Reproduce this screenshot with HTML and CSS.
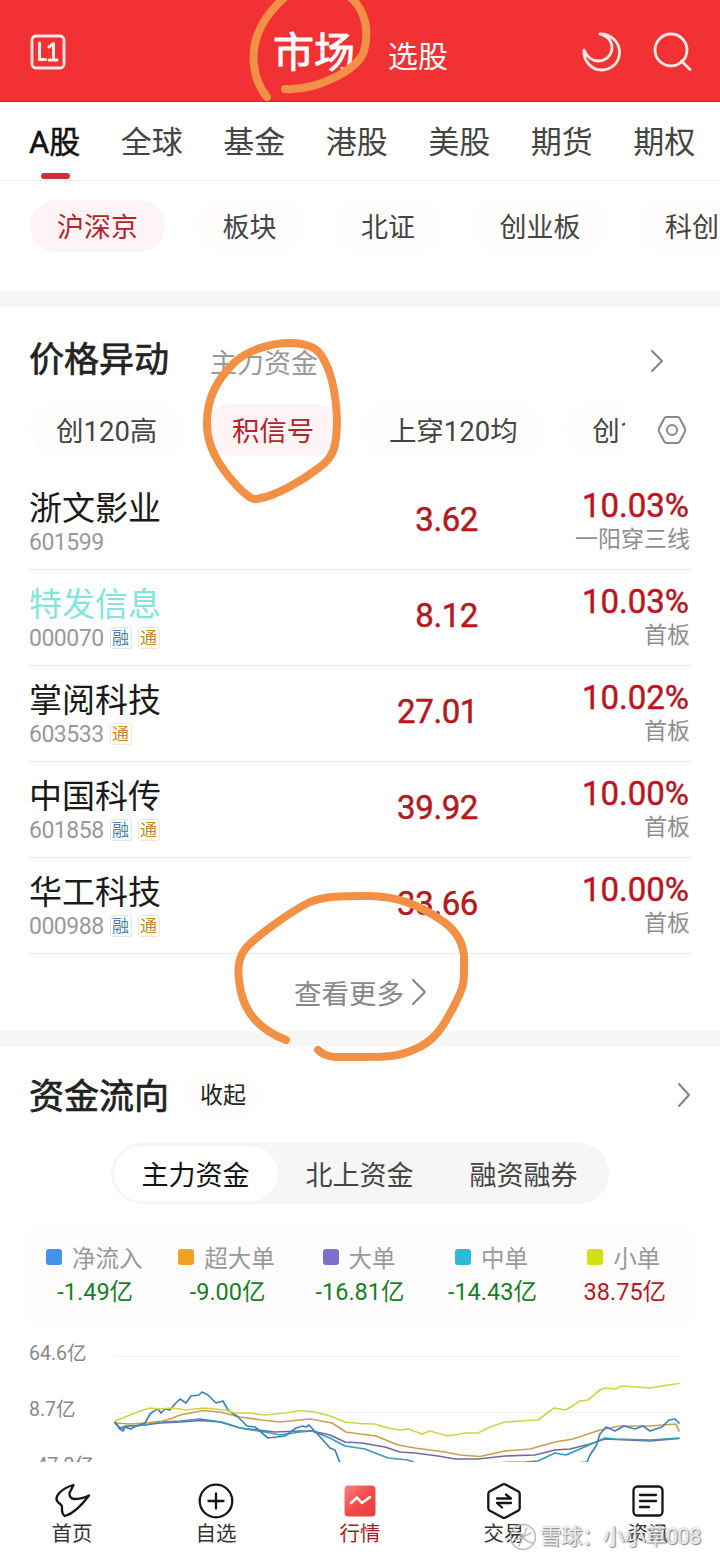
FILE: index.html
```html
<!DOCTYPE html>
<html lang="zh-CN">
<head>
<meta charset="utf-8">
<title>市场</title>
<link rel="stylesheet" href="styles.css">
</head>
<body>
<div class="app">
  <header class="topbar">
    <svg class="level" width="36" height="36" viewBox="0 0 36 36"><rect x="2" y="2" width="32" height="32" rx="4"/><path class="level-mark" d="M9.500 9V25.500H15.500M19 13L23.500 9.500V25.500M19 26H27"/></svg>
    <div class="top-tabs"><b class="top-on">市场</b><span class="top-off">选股</span></div>
    <svg class="moon" width="40" height="40" viewBox="0 0 40 40"><path d="M19 2C26 4 31 9 31 15.500C31 23 25 29 17.500 29C10 29 6 25 3 18C2 28 10 38 20.500 38C30.500 38 38.500 30.500 38.500 20.500C38.500 10 30 2 19 2Z"/></svg>
    <svg class="search" width="40" height="40" viewBox="0 0 40 40"><circle cx="19" cy="18" r="16"/><path d="M29.500 29L38 37.500"/></svg>
  </header>
  <nav class="markets"><span class="market on">A股</span><span class="market">全球</span><span class="market">基金</span><span class="market">港股</span><span class="market">美股</span><span class="market">期货</span><span class="market">期权</span></nav>
  <div class="chips boards"><span class="chip on">沪深京</span><span class="chip">板块</span><span class="chip">北证</span><span class="chip">创业板</span><span class="chip">科创板</span></div>
  <div class="band"></div>
  <section class="moves">
    <div class="head"><h2>价格异动</h2><span class="head-alt">主力资金</span><svg class="chev near" width="14" height="24" viewBox="0 0 14 24"><path d="M2 2L12 12L2 22"/></svg></div>
    <div class="signals">
      <div class="chips signal-chips"><span class="chip">创120高</span><span class="chip on">积信号</span><span class="chip">上穿120均</span><span class="chip">创120低</span></div>
      <svg class="hex" width="30" height="30" viewBox="0 0 30 30"><path d="M9.500 2H20.500Q22 2 22.800 3.500L28 13.500Q28.600 15 28 16.500L22.800 26.500Q22 28 20.500 28H9.500Q8 28 7.200 26.500L2 16.500Q1.400 15 2 13.500L7.200 3.500Q8 2 9.500 2Z"/><circle cx="15" cy="15" r="5"/></svg>
    </div>
    <div class="row"><div class="stock"><div class="name">浙文影业</div><div class="code">601599</div></div><div class="price">3.62</div><div class="gain"><div class="pct">10.03%</div><div class="why">一阳穿三线</div></div></div>
    <div class="row"><div class="stock"><div class="name seen">特发信息</div><div class="code">000070<i class="tag blue">融</i><i class="tag">通</i></div></div><div class="price">8.12</div><div class="gain"><div class="pct">10.03%</div><div class="why">首板</div></div></div>
    <div class="row"><div class="stock"><div class="name">掌阅科技</div><div class="code">603533<i class="tag">通</i></div></div><div class="price">27.01</div><div class="gain"><div class="pct">10.02%</div><div class="why">首板</div></div></div>
    <div class="row"><div class="stock"><div class="name">中国科传</div><div class="code">601858<i class="tag blue">融</i><i class="tag">通</i></div></div><div class="price">39.92</div><div class="gain"><div class="pct">10.00%</div><div class="why">首板</div></div></div>
    <div class="row"><div class="stock"><div class="name">华工科技</div><div class="code">000988<i class="tag blue">融</i><i class="tag">通</i></div></div><div class="price">33.66</div><div class="gain"><div class="pct">10.00%</div><div class="why">首板</div></div></div>
    <div class="more">查看更多<svg class="chev" width="16" height="28" viewBox="0 0 16 28"><path d="M2 2L14 14L2 26"/></svg></div>
  </section>
  <div class="band"></div>
  <section class="flows">
    <div class="head flow-head"><h2>资金流向</h2><span class="fold">收起</span><svg class="chev" width="14" height="26" viewBox="0 0 14 26"><path d="M2 2L12 13L2 24"/></svg></div>
    <div class="segment"><span class="seg on">主力资金</span><span class="seg">北上资金</span><span class="seg">融资融券</span></div>
    <div class="legend">
      <div class="item"><div class="key"><i class="dot net"></i>净流入</div><div class="val">-1.49亿</div></div>
      <div class="item"><div class="key"><i class="dot huge"></i>超大单</div><div class="val">-9.00亿</div></div>
      <div class="item"><div class="key"><i class="dot large"></i>大单</div><div class="val">-16.81亿</div></div>
      <div class="item"><div class="key"><i class="dot mid"></i>中单</div><div class="val">-14.43亿</div></div>
      <div class="item"><div class="key"><i class="dot small"></i>小单</div><div class="val up">38.75亿</div></div>
    </div>
    <div class="chart">
      <div class="axis"><span>64.6亿</span><span>8.7亿</span><span class="low">-47.2亿</span></div>
      <svg class="plot" width="620" height="132" viewBox="100 1330 620 132">
        <path class="grid" d="M115 1355.500H680M115 1411.500H680"/>
        <polyline class="l-large" points="115,1422 120,1427 126,1425 145,1424 160,1422 180,1421 200,1419.500 220,1421 240,1427 275,1431 300,1430 312,1430 330,1434 345,1441 362,1442 385,1446 400,1451 415,1452 438,1455 455,1458 478,1458 505,1455 535,1454 555,1449 570,1448 590,1443 605,1438 650,1440 679,1437.500"/>
        <polyline class="l-mid" points="115,1421 120,1428 126,1425 135,1425 145,1424 160,1421 180,1420 200,1418 222,1421 240,1427 265,1431 280,1434 300,1431 312,1430 330,1437 345,1445 365,1448 388,1457 408,1459 416,1462"/>
        <polyline class="l-mid" points="503,1461.500 525,1461 538,1460 555,1452 566,1454 580,1448 605,1437 615,1438 650,1439 679,1437"/>
        <polyline class="l-huge" points="115,1422 130,1423 145,1422 162,1420 170,1418 180,1414 203,1409.500 220,1411 240,1416 262,1419 280,1421 300,1419 310,1418 332,1422 346,1431 360,1433 376,1435 398,1444 415,1447 445,1451 460,1454 480,1455.500 505,1450 530,1448 555,1441 573,1438 600,1429 620,1425 650,1425 676,1423 679,1430"/>
        <polyline class="l-net" points="115,1421 119,1427 123,1430 125,1426 131,1428 134,1426 145,1422 150,1413 154,1410 158,1408 161,1412 165,1408 170,1409 175,1403 180,1398 186,1402 191,1395 199,1394 202,1391 208,1394 216,1402 223,1400 228,1409 238,1416 247,1425 255,1426 268,1437 285,1435 296,1427 303,1425 306,1426 309,1424 322,1438 330,1447 335,1449 340,1462"/>
        <polyline class="l-net" points="581,1461.500 587,1461 590,1454 596,1445 600,1433 606,1426 615,1430 624,1425 635,1428 643,1425 650,1430 662,1426 669,1419 675,1418 679,1422"/>
        <polyline class="l-small" points="115,1420 130,1414 140,1410 150,1407 160,1408 170,1407 180,1408 185,1409 205,1407 225,1409 235,1412 250,1412 265,1414 285,1412 300,1409.500 315,1411 330,1415 345,1421 360,1422.500 375,1423 388,1427 400,1429 408,1428 422,1433 430,1430 448,1435 465,1432 478,1432 490,1426 505,1421 520,1420 538,1419 554,1407 566,1409 580,1400 588,1399 600,1389 605,1387 615,1388 622,1385 650,1387 668,1384 679,1382.500"/>
      </svg>
    </div>
  </section>
  <nav class="tabbar">
    <a class="tab"><svg width="38" height="38" viewBox="0 0 38 38"><path d="M20.500 3C9 6 0 15 5 20C6.500 22 9 22.500 9 25Q8.500 32 12 34Q23 31 36 13.500Q29 17 21 17Q16 16 16.500 11Z"/></svg>首页</a>
    <a class="tab"><svg width="38" height="38" viewBox="0 0 38 38"><circle cx="19" cy="19" r="16.300"/><path d="M19 11.500V26.500M11.500 19H26.500"/></svg>自选</a>
    <a class="tab on"><svg width="38" height="38" viewBox="0 0 38 38"><defs><linearGradient id="g" x1="0" y1="0" x2="1" y2="1"><stop offset="0" stop-color="#f9817c"/><stop offset=".5" stop-color="#f14d4d"/><stop offset="1" stop-color="#e83c40"/></linearGradient></defs><rect class="tile" x="3.500" y="3.500" width="31" height="31" rx="4"/><path class="trend" d="M10 21L16 15.500L21 21L29 15"/></svg>行情</a>
    <a class="tab"><svg width="38" height="38" viewBox="0 0 38 38"><path d="M17.500 2.500Q19 1.700 20.500 2.500L33.500 9.500Q34.700 10.300 34.700 12V26Q34.700 27.700 33.500 28.500L20.500 35.500Q19 36.300 17.500 35.500L4.500 28.500Q3.300 27.700 3.300 26V12Q3.300 10.300 4.500 9.500Z"/><path d="M12 16.500H26L21 12.500M26 21H12L17 25.500"/></svg>交易</a>
    <a class="tab"><svg width="38" height="38" viewBox="0 0 38 38"><rect x="4.500" y="4.500" width="29" height="29" rx="4"/><path d="M11 13H27M11 19H27M11 25H20"/></svg>资讯</a>
  </nav>
  <div class="watermark"><svg width="28" height="28" viewBox="0 0 28 28"><circle cx="14" cy="14" r="12.500"/><path d="M5 8Q12 10 14 14Q17 19 24 20M18 5L14 14L22 10M10 23L14 14L6 17"/></svg><span>雪球：小小草008</span></div>
  <svg class="marks" width="720" height="1559" viewBox="0 0 720 1559">
    <path d="M267 97Q256 84 254 65C251 40 261 18 286 -4M343 -8C362 3 371 25 364 51C358 70 316 91 285 89"/>
    <path d="M290 343C302 343 314 345 321 355C332 371 336 398 337 418C337 446 334 457 320 467C302 481 276 496 257 499C252 500 246 495 238 487C221 469 207 447 207 425C206 398 219 377 235 362C250 349 272 343 290 343Z"/>
    <path d="M286 1040C260 1030 246 1014 241 992C237 973 237 959 246 948C253 939 291 911 310 902C325 896 340 896 368 896C397 896 420 905 444 922C460 934 465 948 464 963C464 980 465 985 456 1002C445 1023 437 1041 413 1050C397 1057 385 1057 360 1057H335Q324 1056 318 1050"/>
  </svg>
</div>
</body>
</html>
```
FILE: styles.css
```css
* { box-sizing: border-box; }
body { margin: 0; background: #fff; font-family: Roboto, "Noto Sans CJK SC", sans-serif; color: #222; }
svg { display: block; flex: none; fill: none; stroke-linecap: round; stroke-linejoin: round; }
i { font-style: normal; }
h2 { margin: 0; font-size: 35px; font-weight: 400; -webkit-text-stroke: .7px; line-height: 48px; }
.app { position: relative; width: 720px; height: 1559px; overflow: hidden; display: flex; flex-direction: column; white-space: nowrap; }

.topbar { height: 102px; padding: 3px 28px 0 30px; background: #f13133; color: #fff; display: flex; align-items: center; border-bottom: 1px solid #bd2b30; }
.topbar svg { stroke: #ffe9e5; stroke-width: 2.8; }
.topbar .level-mark { stroke-width: 3; }
.top-tabs { display: flex; align-items: center; gap: 33px; margin: 0 auto 0 207px; line-height: 60px; }
.top-on { font-size: 41px; font-weight: 400; -webkit-text-stroke: .9px; padding-top: 1px; }
.top-off { font-size: 30px; padding-top: 9px; }
.search { margin-left: 31px; }

.markets { height: 79px; padding-left: 29px; display: flex; gap: 40.5px; border-bottom: 1px solid #f0f0f0; font-size: 31px; line-height: 81px; color: #444; }
.market { position: relative; height: 78px; }
.market.on { color: #111; -webkit-text-stroke: .5px; }
.market.on::after { content: ""; position: absolute; left: 12px; bottom: 1px; width: 29px; height: 6px; border-radius: 3px; background: #cf2f35; }

.chips { display: flex; }
.chip { flex: none; height: 52px; padding: 0 27px; border-radius: 26px; background: #fffcfc; font-size: 27px; line-height: 56px; color: #444; }
.chip.on { background: #fff4f5; color: #b5232b; }
.boards { height: 110px; padding: 19px 0 0 30px; gap: 30.5px; }
.band { height: 16px; background: #f6f6f7; flex: none; }

.moves { height: 724px; padding: 0 29px; }
.head { display: flex; align-items: center; height: 97px; padding-top: 11px; }
.head-alt { margin-left: 41px; font-size: 27px; color: #999; }
.chev { stroke: #888; stroke-width: 2.2; margin-left: auto; }
.near { margin-right: 27px; }
.signals { display: flex; align-items: center; height: 52px; justify-content: space-between; }
.signal-chips { gap: 20.5px; width: 596px; overflow: hidden; }
.signal-chips .chip { font-size: 27.500px; }
.hex { stroke: #888; stroke-width: 2; margin-right: 4px; }
.row { height: 96px; border-bottom: 1px solid #eaeaea; display: grid; grid-template-columns: 249px 200px 1fr; }
.row:nth-child(3) { height: 114px; padding-top: 18px; }
.name { font-size: 33px; line-height: 44px; height: 49px; padding-top: 13px; color: #1a1a1a; }
.seen { color: #84e4dc; }
.code { display: flex; align-items: center; height: 38px; font-size: 23px; letter-spacing: -.5px; color: #999; }
.tag { width: 22px; height: 22px; margin-left: 6px; border: 1px solid #f7e8cd; border-radius: 3px; font-size: 17px; letter-spacing: 0; line-height: 21px; text-align: center; color: #cc8424; }
.tag.blue { color: #4482bd; border-color: #d6e6f7; }
.price { text-align: right; font-size: 33px; letter-spacing: -.4px; line-height: 92px; color: #b5191f; -webkit-text-stroke: .5px; }
.gain { text-align: right; }
.pct { font-size: 33px; line-height: 40px; padding: 12px 2px 0 0; color: #b5191f; -webkit-text-stroke: .5px; }
.why { font-size: 23px; line-height: 27px; padding-right: 1px; color: #8e8e8e; }
.more { display: flex; justify-content: center; align-items: center; gap: 7px; height: 76px; font-size: 27.500px; color: #888; padding-left: 1px; }
.more .chev { margin: 0; }

.flows { height: 415px; padding: 0 29px; }
.flow-head { height: 96px; padding-top: 0; }
.flow-head h2 { padding-top: 6px; }
.fold { margin-left: 17px; padding: 0 14px; height: 42px; border-radius: 21px; background: #fffcfc; font-size: 23px; line-height: 43px; color: #222; }
.segment { margin-left: 82px; width: 498px; height: 61px; padding: 3px; border-radius: 31px; background: #f6f6f6; display: flex; }
.seg { flex: 1; border-radius: 28px; text-align: center; font-size: 27px; line-height: 61px; height: 55px; overflow: visible; text-indent: -1px; color: #444; }
.seg.on { background: #fff; color: #111; }
.legend { display: flex; height: 98px; margin-top: 21px; padding-top: 15px; border-radius: 6px; background: #fffcfd; }
.item { flex: 1; display: flex; flex-direction: column; align-items: center; }
.key { display: flex; align-items: center; gap: 10px; height: 34px; padding-right: 2px; font-size: 23.500px; color: #999; }
.dot { width: 16px; height: 16px; border-radius: 3px; }
.net { background: #4292ed; } .huge { background: #f2a124; } .large { background: #7b71c9; } .mid { background: #2fb8d3; } .small { background: #d2e10d; }
.val { font-size: 23.500px; line-height: 36px; color: #158025; }
.val.up { color: #b5191f; }
.chart { display: flex; height: 132px; margin: 8px -29px 0 0; overflow: hidden; }
.axis { width: 71px; flex: none; font-size: 19.500px; line-height: 46px; color: #888; display: flex; flex-direction: column; gap: 10px; }
.axis span { flex: none; }
.axis .low { padding-left: 2px; }
.plot { stroke-width: 1.700; }
.grid { stroke: #f2f2f2; stroke-width: 1; }
.l-net { stroke: #4280b5; } .l-huge { stroke: #c9a052; } .l-large { stroke: #716a9f; } .l-mid { stroke: #3b99b9; } .l-small { stroke: #d1d448; }

.tabbar { height: 97px; padding-top: 20px; display: flex; background: #fff; }
.tab { flex: 1; display: flex; flex-direction: column; align-items: center; font-size: 20.500px; line-height: 28px; color: #333; }
.tab svg { stroke: #161616; stroke-width: 2.300; }
.tab.on { color: #a51e25; }
.tab .tile { fill: url(#g); stroke: none; }
.tab .trend { stroke: #fff; stroke-width: 2.500; }
.watermark { position: absolute; left: 509px; top: 1522px; display: flex; align-items: center; gap: 3px; font-size: 21.500px; letter-spacing: -.5px; line-height: 30px; color: #fffc; text-shadow: 1px 1px 1px #888, 0 0 2px #999; }
.watermark svg { stroke: #bbb; stroke-width: 1.500; }
.marks { position: absolute; left: 0; top: 0; stroke: #f29145; stroke-width: 8; pointer-events: none; }
```
